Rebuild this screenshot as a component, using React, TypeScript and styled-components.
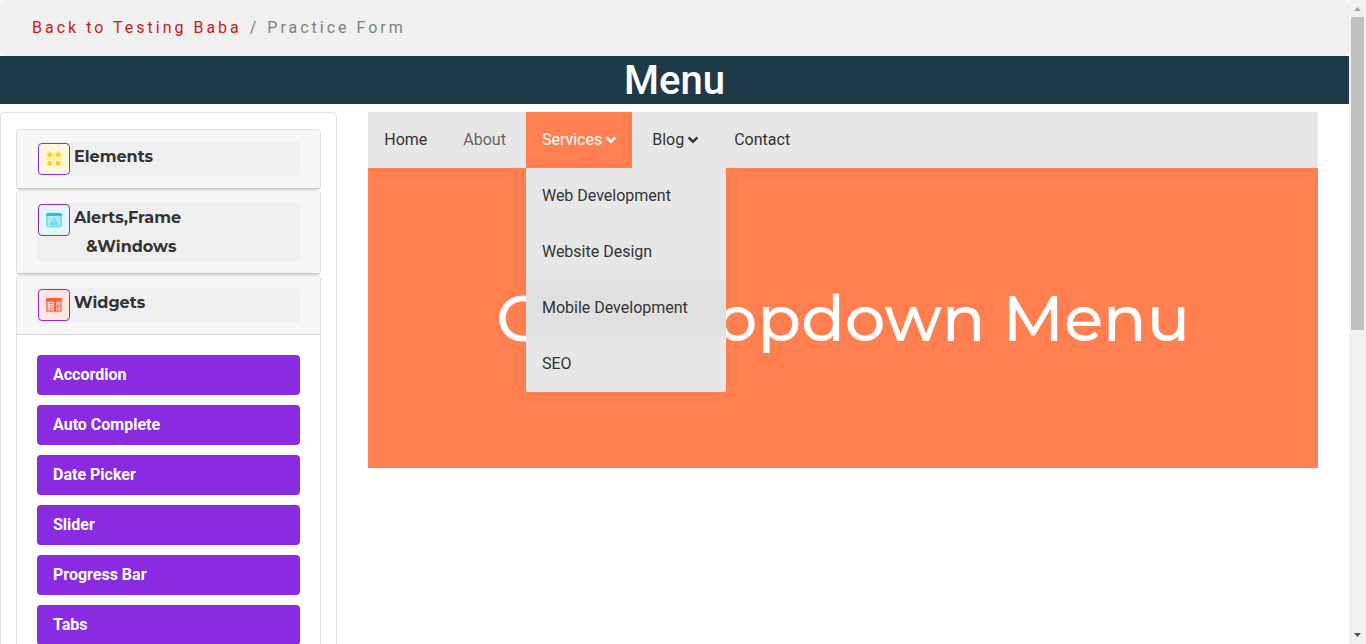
import React from "react";
import styled, { createGlobalStyle, css } from "styled-components";
import { FaAngleDown } from "react-icons/fa";

const GlobalStyle = createGlobalStyle`
  *, *::before, *::after { box-sizing: border-box; }
  body {
    margin: 0;
    background: #fff;
    color: #333;
    font-family: Roboto, "Liberation Sans", sans-serif;
    font-size: 16px;
    line-height: 24px;
  }
  button { font: inherit; color: inherit; border: 0; margin: 0; }
  a { color: inherit; text-decoration: none; }
`;

const Shell = styled.div`
  display: flex;
  height: 100vh;
`;

const Page = styled.div`
  flex: 1;
  min-width: 0;
  overflow-y: auto;
  scrollbar-width: none;
`;

const ScrollTrack = styled.div`
  display: flex;
  flex-direction: column;
  align-items: center;
  width: 17px;
  background: #f1f1f1;
`;

const ScrollArrow = styled.svg`
  display: block;
  flex: none;
  width: 17px;
  height: 17px;
`;

const ScrollThumb = styled.div`
  width: 13px;
  height: 313px;
  margin-bottom: auto;
  background: #c1c1c1;
`;

const Breadcrumb = styled.nav`
  padding: 16px 32px;
  border-radius: 4px;
  background: #f0f0f0;
  color: #808080;
  letter-spacing: 3px;
`;

const BackLink = styled.a`
  color: #cc1a10;
`;

const Slash = styled.span`
  margin: 0 1px;
`;

const Title = styled.h1`
  margin: 0 0 8px;
  padding-top: 1px;
  background: #1e3948;
  color: #fff;
  font-size: 40px;
  font-weight: 500;
  line-height: 47px;
  text-align: center;
`;

const Columns = styled.div`
  display: flex;
  align-items: flex-start;
`;

const Sidebar = styled.aside`
  flex: none;
  width: 25%;
  padding: 16px 15px;
  border: 1px solid #dee2e6;
  border-radius: 4px;
`;

const Card = styled.section`
  border: 1px solid #dfdfdf;
  border-radius: 4px;
`;

const CardHeader = styled.h2<{ $open?: boolean }>`
  margin: 0;
  padding: 12px 20px;
  background: #f7f7f7;
  border-bottom: 1px solid ${(p) => (p.$open ? "#d8d8d8" : "#c9c9c9")};
  border-radius: 3px 3px 0 0;
`;

const HeaderButton = styled.button`
  display: flex;
  align-items: flex-start;
  gap: 4px;
  width: 100%;
  min-height: 34px;
  padding: 0 1px;
  border-radius: 4px;
  background: #efefef;
  font-family: Montserrat, Inter, sans-serif;
  font-size: 16px;
  font-weight: 700;
  line-height: 29px;
  text-align: left;
`;

const IconBox = styled.span<{ $tint: string }>`
  display: grid;
  place-items: center;
  flex: none;
  width: 32px;
  height: 32px;
  margin-top: 1px;
  border: 1px solid #8a2be2;
  border-radius: 4px;
  background: ${(p) => p.$tint};
`;

const SecondLine = styled.span`
  display: block;
  padding-left: 12px;
`;

const LinkList = styled.ul`
  display: flex;
  flex-direction: column;
  gap: 10px;
  margin: 0;
  padding: 20px;
  list-style: none;
`;

const ListLink = styled.a`
  display: block;
  padding: 8px 16px;
  border-radius: 4px;
  background: #8a2be2;
  color: #fff;
  font-weight: 700;
`;

const Main = styled.main`
  flex: 1;
  min-width: 0;
  padding: 0 31px;
`;

const MenuBar = styled.ul`
  display: flex;
  gap: 4px;
  margin: 0;
  padding: 0;
  background: #e7e7e7;
  list-style: none;
`;

const MenuItem = styled.li`
  position: relative;
`;

const MenuLink = styled.a<{ $state?: "open" | "muted" | "hover" }>`
  display: flex;
  align-items: center;
  gap: 4px;
  padding: 16px;
  white-space: nowrap;
  ${(p) => p.$state === "open" && css`background: #ff7f50; color: #fff;`}
  ${(p) => p.$state === "muted" && css`color: #666;`}
  ${(p) => p.$state === "hover" && css`background: #e0e0e0;`}
`;

const Caret = styled(FaAngleDown)`
  width: 10px;
  height: 16px;
`;

const Dropdown = styled.ul`
  position: absolute;
  top: 100%;
  left: 0;
  z-index: 1;
  width: 200px;
  margin: 0;
  padding: 0;
  background: #e7e7e7;
  list-style: none;
`;

const Hero = styled.div`
  display: grid;
  place-items: center;
  min-height: 300px;
  background: #ff7f50;
  color: #fff;
  font-family: Montserrat, Inter, sans-serif;
  font-size: 64px;
  font-weight: 500;
  line-height: 80px;
  white-space: nowrap;
`;

function ElementsIcon() {
  return (
    <svg width="16" height="16" viewBox="0 0 16 16" aria-hidden="true">
      <path d="M7.200 1h1.600v6.200H15.500v1.600H8.800V15H7.200V8.800H.5V7.200h6.700z" fill="#ffe98c" />
      <g fill="#ffd211">
        <rect x="1.500" y="1.500" width="4.500" height="4.500" rx="1" />
        <rect x="10" y="1.500" width="4.500" height="4.500" rx="1" />
        <rect x="1.500" y="10" width="4.500" height="4.500" rx="1" />
        <rect x="10" y="10" width="4.500" height="4.500" rx="1" />
      </g>
    </svg>
  );
}

function AlertsIcon() {
  return (
    <svg width="16" height="16" viewBox="0 0 16 16" aria-hidden="true">
      <rect x="1" y="1.500" width="14" height="13" rx="1.500" fill="#b4eaf1" stroke="#6ed9e6" strokeWidth="1.600" />
      <path d="M0 4V2.500Q0 1 1.500 1h13Q16 1 16 2.500V4z" fill="#26c6da" />
      <path d="M8 5 12.500 13H3.500z" fill="#6ed9e6" />
      <path d="M8 7.500v3M8 11.500v1" stroke="#c8f0f5" strokeWidth="1" />
    </svg>
  );
}

function WidgetsIcon() {
  return (
    <svg width="16" height="16" viewBox="0 0 16 16" aria-hidden="true">
      <rect x="0" y="1" width="16" height="14" rx="1.500" fill="#ff8a73" />
      <path d="M0 4V2.500Q0 1 1.500 1h13Q16 1 16 2.500V4zM8 4h2v10H8z" fill="#ff5a3c" />
      <path d="M2 5h6v8H2z" fill="#ffd6ce" />
      <path d="M3 6.500h4M3 9h4M3 11.500h4" stroke="#ff7a61" strokeWidth="1" />
      <path d="M10 5h4v3h-4zM10 10h4v3h-4z" fill="#ffc4b9" />
      <path d="M12 5v8" stroke="#ff7a61" strokeWidth="1" />
    </svg>
  );
}

const widgets = ["Accordion", "Auto Complete", "Date Picker", "Slider", "Progress Bar", "Tabs"];
const services = ["Web Development", "Website Design", "Mobile Development", "SEO"];

export default function App() {
  return (
    <Shell>
      <GlobalStyle />
      <Page>
        <Breadcrumb>
          <BackLink href="#">Back to Testing Baba</BackLink> <Slash>/</Slash> Practice Form
        </Breadcrumb>
        <Title>Menu</Title>
        <Columns>
          <Sidebar>
            <Card>
              <CardHeader>
                <HeaderButton type="button">
                  <IconBox $tint="#fff8dc"><ElementsIcon /></IconBox>
                  <span>Elements</span>
                </HeaderButton>
              </CardHeader>
            </Card>
            <Card>
              <CardHeader>
                <HeaderButton type="button">
                  <IconBox $tint="#e2f7fa"><AlertsIcon /></IconBox>
                  <span>
                    Alerts,Frame
                    <SecondLine>&amp;Windows</SecondLine>
                  </span>
                </HeaderButton>
              </CardHeader>
            </Card>
            <Card>
              <CardHeader $open>
                <HeaderButton type="button" aria-expanded="true">
                  <IconBox $tint="#ffe5e0"><WidgetsIcon /></IconBox>
                  <span>Widgets</span>
                </HeaderButton>
              </CardHeader>
              <LinkList>
                {widgets.map((name) => (
                  <li key={name}><ListLink href="#">{name}</ListLink></li>
                ))}
              </LinkList>
            </Card>
          </Sidebar>
          <Main>
            <MenuBar>
              <MenuItem><MenuLink href="#">Home</MenuLink></MenuItem>
              <MenuItem><MenuLink href="#" $state="muted">About</MenuLink></MenuItem>
              <MenuItem>
                <MenuLink href="#" $state="open">Services<Caret /></MenuLink>
                <Dropdown>
                  {services.map((name) => (
                    <li key={name}>
                      <MenuLink href="#" $state={name === "Mobile Development" ? "hover" : undefined}>{name}</MenuLink>
                    </li>
                  ))}
                </Dropdown>
              </MenuItem>
              <MenuItem><MenuLink href="#">Blog<Caret /></MenuLink></MenuItem>
              <MenuItem><MenuLink href="#">Contact</MenuLink></MenuItem>
            </MenuBar>
            <Hero>CSS Dropdown Menu</Hero>
          </Main>
        </Columns>
      </Page>
      <ScrollTrack aria-hidden="true">
        <ScrollArrow viewBox="0 0 17 17"><path d="M5 11 8.500 7 12 11z" fill="#a3a3a3" /></ScrollArrow>
        <ScrollThumb />
        <ScrollArrow viewBox="0 0 17 17"><path d="M5 6 8.500 10 12 6z" fill="#505050" /></ScrollArrow>
      </ScrollTrack>
    </Shell>
  );
}
